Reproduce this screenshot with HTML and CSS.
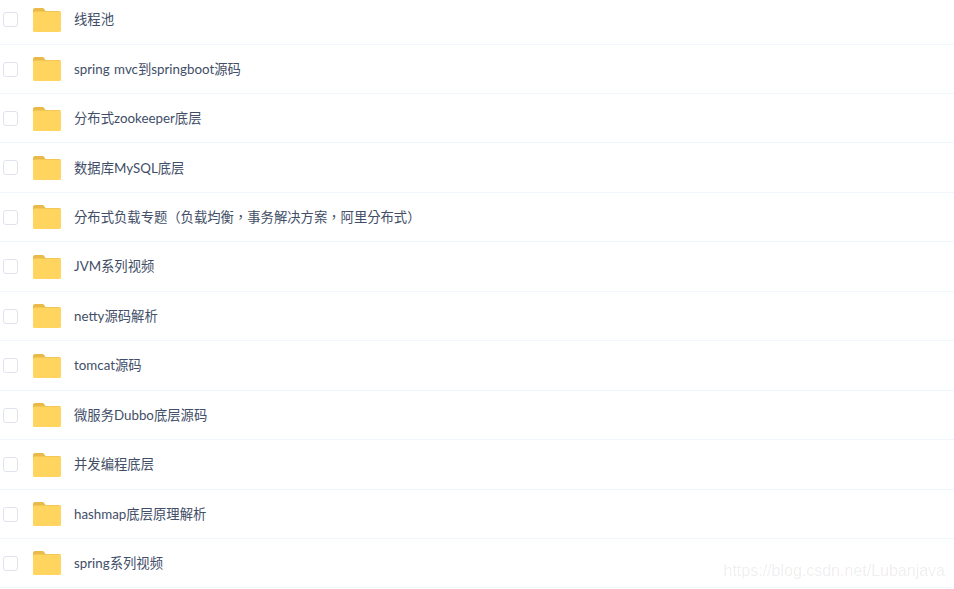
FILE: index.html
```html
<!DOCTYPE html>
<html lang="zh">
<head>
    <meta charset="UTF-8">
    <title>文件列表</title>
    <link rel="stylesheet" href="styles.css">
</head>
<body>
    <svg class="defs" width="0" height="0">
        <symbol id="folder" viewBox="0 0 28 24">
            <path d="M0 2a2 2 0 0 1 2-2h7.500a2 2 0 0 1 1.500.7L12.500 3H26a2 2 0 0 1 2 2v8H0z" fill="#e9b949"/>
            <rect x="0" y="3.500" width="28" height="20.500" rx="1.500" fill="#ffd45f"/>
        </symbol>
    </svg>
    <ul class="file-list">
        <li class="file-row"><span class="check"></span><svg class="folder"><use href="#folder"/></svg><span class="name">线程池</span></li>
        <li class="file-row"><span class="check"></span><svg class="folder"><use href="#folder"/></svg><span class="name">spring mvc到springboot源码</span></li>
        <li class="file-row"><span class="check"></span><svg class="folder"><use href="#folder"/></svg><span class="name">分布式zookeeper底层</span></li>
        <li class="file-row"><span class="check"></span><svg class="folder"><use href="#folder"/></svg><span class="name">数据库MySQL底层</span></li>
        <li class="file-row"><span class="check"></span><svg class="folder"><use href="#folder"/></svg><span class="name" lang="zh-TW">分布式负载专题（负载均衡，事务解决方案，阿里分布式）</span></li>
        <li class="file-row"><span class="check"></span><svg class="folder"><use href="#folder"/></svg><span class="name">JVM系列视频</span></li>
        <li class="file-row"><span class="check"></span><svg class="folder"><use href="#folder"/></svg><span class="name">netty源码解析</span></li>
        <li class="file-row"><span class="check"></span><svg class="folder"><use href="#folder"/></svg><span class="name">tomcat源码</span></li>
        <li class="file-row"><span class="check"></span><svg class="folder"><use href="#folder"/></svg><span class="name">微服务Dubbo底层源码</span></li>
        <li class="file-row"><span class="check"></span><svg class="folder"><use href="#folder"/></svg><span class="name">并发编程底层</span></li>
        <li class="file-row"><span class="check"></span><svg class="folder"><use href="#folder"/></svg><span class="name">hashmap底层原理解析</span></li>
        <li class="file-row"><span class="check"></span><svg class="folder"><use href="#folder"/></svg><span class="name">spring系列视频</span></li>
    </ul>
    <div class="watermark">https://blog.csdn.net/Lubanjava</div>
</body>
</html>
```

FILE: styles.css
```css
* {
    margin: 0;
    padding: 0;
    box-sizing: border-box;
}
html, body {
    height: 589px;
    overflow: hidden;
}
body {
    font-family: Lato, "Noto Sans CJK TC", sans-serif;
    background-color: #fff;
    color: #424e67;
    position: relative;
}
.defs {
    position: absolute;
}
.file-list {
    list-style: none;
    margin-top: -4.85px;
}
.file-row {
    display: flex;
    align-items: center;
    height: 49.45px;
    padding-top: 0.6px;
    padding-left: 3px;
    border-bottom: 1px solid #f2f6fd;
}
.check {
    width: 15px;
    height: 15px;
    border: 1px solid #dfe3ec;
    border-radius: 3px;
    background-color: #fff;
}
.folder {
    width: 28px;
    height: 24px;
    margin-left: 15px;
}
.name {
    margin-left: 13px;
    margin-top: -1.8px;
    font-size: 13.33px;
    word-spacing: 1px;
}
.watermark {
    position: absolute;
    right: 9px;
    top: 562px;
    font-family: "Liberation Sans", sans-serif;
    font-size: 16px;
    color: rgba(0, 0, 0, 0.08);
}
```
